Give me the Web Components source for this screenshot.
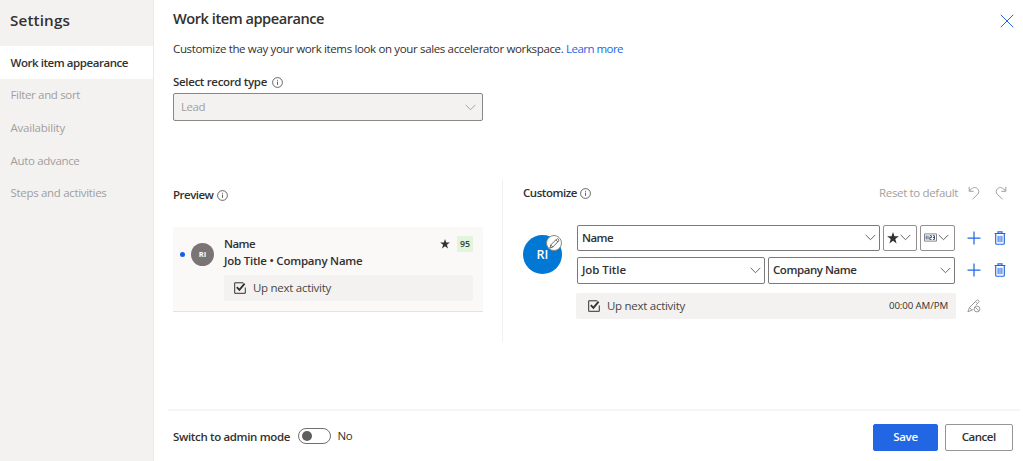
<!DOCTYPE html>
<html lang="en">
<head>
<meta charset="utf-8">
<title>Settings</title>
<style>
html,body{margin:0;height:100%;overflow:hidden;background:#fff}
body{font-family:"Open Sans","Noto Sans",sans-serif;font-size:11.5px;line-height:16px;color:#323130}
</style>
</head>
<body>
<settings-page></settings-page>
<script>
function define(name, html, setup) {
  const template = document.createElement('template');
  template.innerHTML = html;
  customElements.define(name, class extends HTMLElement {
    constructor() {
      super();
      this.attachShadow({mode: 'open'}).append(template.content.cloneNode(true));
    }
    connectedCallback() { if (setup) setup(this, this.shadowRoot); }
  });
}

const icons = {
  info: [11, 11, '<circle cx="5.5" cy="5.5" r="4.9" stroke-width=".9"/><path d="M5.5 4.6v3.3M5.5 2.8v1" stroke-width=".9"/>'],
  close: [14, 14, '<path d="M.8.8l12.4 12.4M13.2.8L.8 13.2" stroke-width="1"/>'],
  chevron: [11, 7, '<path d="M.7.9l4.8 4.8L10.3.9" stroke-width=".95"/>'],
  plus: [14, 14, '<path d="M7 .5v13M.5 7h13" stroke-width="1.25"/>'],
  trash: [12, 14, '<path d="M.6 2.5h10.8M4 2.3V.8h4v1.5M1.7 2.7v9.5q0 1 1 1h6.6q1 0 1-1V2.7" stroke-width="1.15"/><path d="M4.1 4.8v6.4M6 4.8v6.4M7.9 4.8v6.4" stroke-width="1"/>'],
  undo: [12, 14, '<path d="M1.2.8v4.5h4.5M1.5 5.1C3.4 1.7 7.2.5 9.4 2.6c2 1.8 1.8 4.2.2 5.8L4.5 13.2"/>'],
  redo: [12, 14, '<path d="M10.8.8v4.5H6.3M10.5 5.1C8.6 1.7 4.8.5 2.6 2.6c-2 1.8-1.8 4.2-.2 5.8l5.1 4.8"/>'],
  star: [10, 10, '<path fill="currentColor" stroke="none" d="M5 .1l1.2 3.5h3.7L6.9 5.8 8 9.5 5 7.3 2 9.5l1.1-3.7L.1 3.6h3.7z"/>'],
  check: [12, 12, '<path d="M11.3 5.5v5.8H.7V.8h8.6" stroke-width="1"/><path d="M2.8 5.1l2.6 2.8 5.2-6.3" stroke-width="1.8"/>'],
  pencil: [12, 12, '<path d="M1 11l.9-3.4L8.4 1.1q.8-.7 1.8.2t.3 1.9L4.2 9.9zM1.9 7.6l2.3 2.3M7.4 2.1l2.4 2.4" stroke-width=".85"/>'],
  pencilOff: [14, 14, '<path d="M6.2 10.6l-5.3 2.2 1.6-4.3L9.7 1.3q.8-.8 1.8.1t.2 1.9L8.9 6.2M2.5 8.5l2.2 2.3M8.5 2.6l2.2 2.2" stroke-width=".95"/><circle cx="10" cy="10" r="2.9" stroke-width=".95"/><path d="M8.2 8.2l3.6 3.6" stroke-width=".95"/>'],
  score: [13, 9, '<path d="M.5.9h12v7.2H.5z" stroke-width=".9" stroke="#77777d"/><path d="M2.2 2.5v4M4 2.5v4M5.7 2.7h1.7v1.8H5.7v1.9h1.8M8.9 2.7h1.6v3.7H8.9M8.9 4.5h1.6" stroke="#3c5278" stroke-width="1"/>']
};
define('ui-icon', `<style>:host{display:inline-flex;flex:none}svg{display:block;fill:none;stroke:currentColor}</style>`, (el, root) => {
  const [w, h, body] = icons[el.getAttribute('name')];
  const width = +el.getAttribute('size') || w;
  root.innerHTML += `<svg viewBox="0 0 ${w} ${h}" width="${width}" height="${width * h / w}">${body}</svg>`;
});

/* A single line of text whose tracking is set so that it fills the width in "w". */
define('ui-text', `<style>:host{display:inline-block;flex:none;white-space:pre}:host([strong]){font-weight:600}</style><span><slot></slot></span>`, (el, root) => {
  const span = root.querySelector('span');
  const target = +el.getAttribute('w');
  const natural = span.getBoundingClientRect().width;
  if (target && natural) {
    span.style.letterSpacing = (target - natural) / el.textContent.length + 'px';
    el.style.width = target + 'px';
  }
});

define('nav-item', `<style>
:host{display:flex;align-items:center;height:32.6px;padding:1px 0 0 10.5px;color:#a19f9d;box-sizing:border-box}
:host([selected]){background:#fff;color:#323130;font-weight:600}
</style><slot></slot>`);

define('side-nav', `<style>
:host{display:block;background:#f3f2f1;border-right:1px solid #eae9e8;box-sizing:border-box}
header{height:46px;box-sizing:border-box;padding:10px 0 0 10px;font-size:15.2px;line-height:20px;font-weight:600}
</style>
<header><ui-text w="60">Settings</ui-text></header>
<nav>
<nav-item selected><ui-text w="117.5">Work item appearance</ui-text></nav-item>
<nav-item><ui-text w="69.5">Filter and sort</ui-text></nav-item>
<nav-item><ui-text w="54.5">Availability</ui-text></nav-item>
<nav-item><ui-text w="69">Auto advance</ui-text></nav-item>
<nav-item><ui-text w="96">Steps and activities</ui-text></nav-item>
</nav>`);

define('ui-select', `<style>
:host{display:flex;align-items:center;justify-content:space-between;height:26.5px;box-sizing:border-box;padding:0 3px 0 4px;border:1px solid #7c7a78;border-radius:2px;background:#fff;font-weight:600}
:host([small]){border-color:#93918f;padding:0 5px 0 3px}
:host([disabled]){height:28px;background:#f3f2f1;color:#a19f9d;font-weight:400;padding:0 6px 0 7px;border-color:#8a8886}
ui-icon{color:#605e5c}
:host([disabled]) ui-icon{color:#a19f9d}
</style><slot></slot><ui-icon name="chevron"></ui-icon>`);

define('info-label', `<style>
:host{display:flex;align-items:center;gap:var(--gap,3px);font-weight:600}
ui-icon{color:#555}
</style><slot></slot><ui-icon name="info"></ui-icon>`);

define('activity-bar', `<style>
:host{display:flex;align-items:center;height:26px;box-sizing:border-box;background:#f3f2f1;border-radius:2px;color:#484644}
ui-icon{margin-right:7px;color:#323130}
::slotted(*){margin-left:auto}
</style><ui-icon name="check"></ui-icon><ui-text w="78">Up next activity</ui-text><slot></slot>`);

define('preview-card', `<style>
:host{display:flex;width:310px;height:85px;box-sizing:border-box;background:#faf9f8;border-bottom:1px solid #e4e2e0;padding:9px 10px 0 7px}
.dot{width:5px;height:5px;border-radius:50%;background:#1160eb;margin:16px 6px 0 0;flex:none}
.avatar{width:23px;height:23px;margin:7px 10px 0 0;flex:none;border-radius:50%;background:#7a7574;color:#fff;display:flex;align-items:center;justify-content:center;font-size:7.5px;font-weight:700}
.body{flex:1}
.row{display:flex;align-items:center;height:16px;font-weight:600}
.row+.row{padding-top:1px}
.row ui-icon{margin-left:auto;margin-right:7px}
.badge{width:16px;height:16px;background:#dff6dd;display:flex;align-items:center;justify-content:center;font-size:8.8px;font-weight:600;color:#3a3a37}
activity-bar{margin-top:6px;padding-left:10px}
</style>
<span class="dot"></span><span class="avatar"><ui-text>RI</ui-text></span>
<div class="body">
<div class="row"><ui-text w="31">Name</ui-text><ui-icon name="star"></ui-icon><span class="badge"><ui-text w="10">95</ui-text></span></div>
<div class="row"><ui-text w="138.5">Job Title • Company Name</ui-text></div>
<activity-bar></activity-bar>
</div>`);

define('edit-avatar', `<style>
:host{display:flex;position:relative;width:39px;height:39px;border-radius:50%;background:#0078d4;color:#fff;align-items:center;justify-content:center;font-size:12.5px;font-weight:600}
.edit{position:absolute;right:0;top:0;width:16px;height:16px;box-sizing:border-box;border:1px solid #8a8886;border-radius:50%;background:#fff;color:#444;display:flex;align-items:center;justify-content:center}
</style><ui-text w="12">RI</ui-text><span class="edit"><ui-icon name="pencil" size="11"></ui-icon></span>`);

define('row-actions', `<style>
:host{display:flex;align-items:center;gap:13px;padding-left:12px;color:#2266e3}
</style><ui-icon name="plus"></ui-icon><ui-icon name="trash"></ui-icon>`);

define('customize-panel', `<style>
:host{display:block;flex:1;padding-left:20px}
header{display:flex;align-items:center;height:26px}
.reset{display:flex;align-items:center;margin-left:auto;padding-right:16.5px;color:#a19f9d}
.reset ui-text{margin-right:10px}.reset ui-icon+ui-icon{margin-left:14.5px}
.editor{display:flex;padding-top:18.5px}
edit-avatar{margin:10.5px 14px 0 0;flex:none}
.row{display:flex;margin:0 0 6px 1px}
.fields{display:grid;gap:3px;width:378px}
.first{grid-template-columns:303px 34px 35px}
.second{grid-template-columns:188px 187px}
.last{display:flex;align-items:center;margin-top:9px}
activity-bar{width:380px;padding:0 8px 0 12px}
.last>ui-icon{margin-left:11px;color:#979593}
.time{font-size:9.7px;color:#323130}
</style>
<header><info-label><ui-text w="54">Customize</ui-text></info-label>
<span class="reset"><ui-text w="79">Reset to default</ui-text><ui-icon name="undo"></ui-icon><ui-icon name="redo"></ui-icon></span></header>
<div class="editor"><edit-avatar></edit-avatar><div>
<div class="row"><div class="fields first"><ui-select><ui-text w="31">Name</ui-text></ui-select><ui-select small><ui-icon name="star" size="12"></ui-icon></ui-select><ui-select small><ui-icon name="score"></ui-icon></ui-select></div><row-actions></row-actions></div>
<div class="row"><div class="fields second"><ui-select><ui-text w="44">Job Title</ui-text></ui-select><ui-select><ui-text w="83.5">Company Name</ui-text></ui-select></div><row-actions></row-actions></div>
<div class="last"><activity-bar><ui-text class="time" w="59">00:00 AM/PM</ui-text></activity-bar><ui-icon name="pencilOff"></ui-icon></div>
</div></div>`);

define('ui-toggle', `<style>
:host{display:block;width:33px;height:16px;box-sizing:border-box;border:1px solid #716f6d;border-radius:9px;padding:2px 3px}
span{display:block;width:10px;height:10px;border-radius:50%;background:#605e5c}
</style><span></span>`);

define('ui-button', `<style>
:host{display:flex;align-items:center;justify-content:center;width:68.5px;height:26.5px;box-sizing:border-box;border:1px solid #979593;border-radius:2px;font-weight:600}
:host([primary]){width:65px;background:#2266e3;border-color:#2266e3;color:#fff}
</style><slot></slot>`);

define('page-footer', `<style>
:host{display:flex;align-items:flex-start;height:51px;box-sizing:border-box;border-top:2px solid #f6f5f4;margin:0 3px 0 14px;padding:13px 7px 0 5px}
.label{margin:5px 8px 0 0}.no{margin:4px auto 0 6.5px}
ui-toggle{margin-top:4px}
ui-button+ui-button{margin-left:6.5px}
</style>
<ui-text class="label" strong w="117">Switch to admin mode</ui-text><ui-toggle></ui-toggle><ui-text class="no" w="15">No</ui-text>
<ui-button primary><ui-text w="24.5">Save</ui-text></ui-button><ui-button><ui-text w="34">Cancel</ui-text></ui-button>`);

define('settings-page', `<style>
:host{display:grid;grid-template-columns:154px 1fr;height:461px}
main{display:flex;flex-direction:column;min-width:0}
.top{height:180px;box-sizing:border-box;padding:8px 9px 0 19px}
.title{display:flex;justify-content:space-between;height:32px;font-size:14.6px;line-height:21px;font-weight:600}
.title ui-icon{color:#2266e3;margin-top:6px}
.desc{display:flex;height:18px;line-height:18px;align-items:center}
.link{color:#2266e3}
info-label{height:16px}
.type{margin-top:16px;--gap:5px}
.top ui-select{width:310px;margin-top:3px}
.panels{display:flex;height:229px}
.preview{width:349px;height:162px;box-sizing:border-box;padding:7px 0 0 19px;border-right:1px solid #f1f0ef;flex:none}
.preview info-label{margin-bottom:23.5px}
</style>
<side-nav></side-nav>
<main>
<section class="top">
<div class="title"><ui-text w="151">Work item appearance</ui-text><ui-icon name="close"></ui-icon></div>
<div class="desc"><ui-text w="393">Customize the way your work items look on your sales accelerator workspace. </ui-text><ui-text class="link" w="57">Learn more</ui-text></div>
<info-label class="type"><ui-text w="94">Select record type</ui-text></info-label>
<ui-select disabled><ui-text w="24">Lead</ui-text></ui-select>
</section>
<section class="panels">
<div class="preview"><info-label><ui-text w="40.5">Preview</ui-text></info-label><preview-card></preview-card></div>
<customize-panel></customize-panel>
</section>
<page-footer></page-footer>
</main>`);
</script>
</body>
</html>
